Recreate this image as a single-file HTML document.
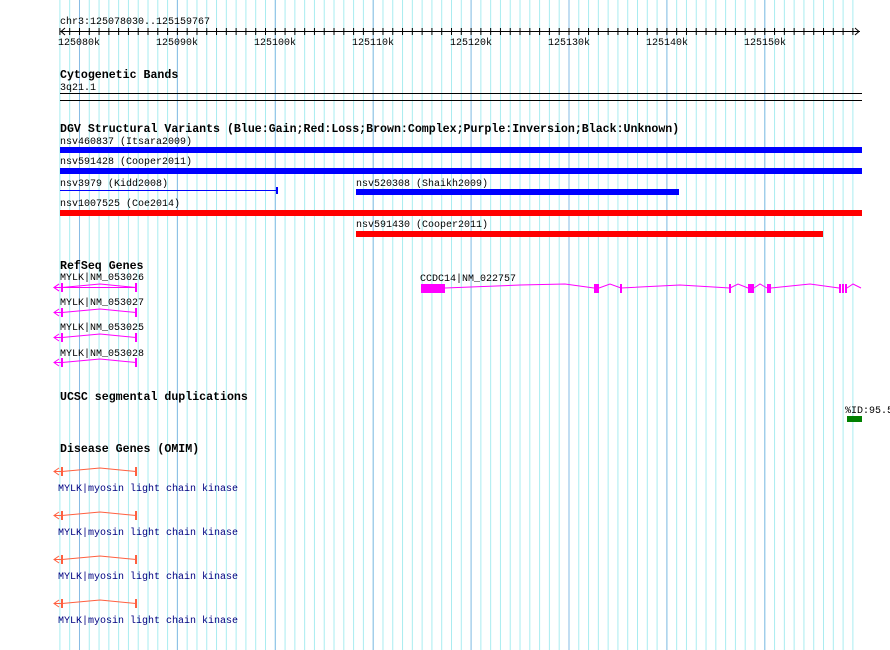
<!DOCTYPE html>
<html><head><meta charset="utf-8"><style>
html,body{margin:0;padding:0;background:#fff;}
svg{display:block;}
text{font-family:"Liberation Mono",monospace;font-size:10px;fill:#000;}
.b{font-weight:bold;font-size:11.6px;}
.n{fill:#000080;}
</style></head><body>
<svg width="890" height="650" viewBox="0 0 890 650" xmlns="http://www.w3.org/2000/svg">
<defs>
<pattern id="mn" x="59.4" y="0" width="9.79" height="650" patternUnits="userSpaceOnUse">
<rect x="0" y="0" width="1" height="650" fill="#a8ecf0"/></pattern>
<pattern id="mj" x="79" y="0" width="97.9" height="650" patternUnits="userSpaceOnUse">
<rect x="0" y="0" width="1" height="650" fill="#88bce4"/></pattern>
<pattern id="tk" x="59.4" y="0" width="9.79" height="650" patternUnits="userSpaceOnUse">
<rect x="0" y="28" width="1" height="7" fill="#000"/></pattern>
</defs>
<rect x="59" y="0" width="796" height="650" fill="url(#mn)"/>
<rect x="75" y="0" width="780" height="650" fill="url(#mj)"/>
<!-- ruler -->
<text x="60" y="24">chr3:125078030..125159767</text>
<rect x="60" y="31" width="800" height="1" fill="#000"/>
<rect x="59" y="0" width="796" height="650" fill="url(#tk)" opacity="1" style="clip-path:inset(27px 0 614px 0)"/>
<path d="M65 28 L61 31.5 L65 35 M855 28 L859 31.5 L855 35" stroke="#000" fill="none"/>
<text x="58" y="45">125080k</text><text x="156" y="45">125090k</text><text x="254" y="45">125100k</text><text x="352" y="45">125110k</text><text x="450" y="45">125120k</text><text x="548" y="45">125130k</text><text x="646" y="45">125140k</text><text x="744" y="45">125150k</text>
<!-- cyto -->
<text class="b" x="60" y="78">Cytogenetic Bands</text>
<text x="60" y="90">3q21.1</text>
<rect x="60" y="93" width="802" height="1" fill="#000"/>
<rect x="60" y="100" width="802" height="1" fill="#000"/>
<!-- DGV -->
<text class="b" x="60" y="132">DGV Structural Variants (Blue:Gain;Red:Loss;Brown:Complex;Purple:Inversion;Black:Unknown)</text>
<text x="60" y="144">nsv460837 (Itsara2009)</text>
<rect x="60" y="147" width="802" height="6" fill="#0000ff"/>
<text x="60" y="164">nsv591428 (Cooper2011)</text>
<rect x="60" y="168" width="802" height="6" fill="#0000ff"/>
<text x="60" y="186">nsv3979 (Kidd2008)</text>
<rect x="60" y="190" width="217" height="1" fill="#0000ff"/>
<rect x="276" y="187" width="2" height="7" fill="#0000ff"/>
<text x="356" y="186">nsv520308 (Shaikh2009)</text>
<rect x="356" y="189" width="323" height="6" fill="#0000ff"/>
<text x="60" y="206">nsv1007525 (Coe2014)</text>
<rect x="60" y="210" width="802" height="6" fill="#ff0000"/>
<text x="356" y="227">nsv591430 (Cooper2011)</text>
<rect x="356" y="231" width="467" height="6" fill="#ff0000"/>
<!-- RefSeq -->
<text class="b" x="60" y="269">RefSeq Genes</text>
<g fill="none" stroke="#ff00ff">
<g id="g1"><path d="M59 284 L54 287.5 L59 291 M54 287.5 L136 287.5"/></g>
</g>
<g stroke="#ff00ff" fill="none">
<path d="M59 284 L54 287.5 L59 291 M54 287.5 H62 L100 284 L136 287.5"/>
<path d="M59 309 L54 312.5 L59 316 M54 312.5 H62 L100 309 L136 312.5"/>
<path d="M59 334 L54 337.5 L59 341 M54 337.5 H62 L100 334 L136 337.5"/>
<path d="M59 359 L54 362.5 L59 366 M54 362.5 H62 L100 359 L136 362.5"/>
</g>
<g fill="#ff00ff">
<rect x="61" y="283" width="2" height="9"/><rect x="135" y="283" width="2" height="9"/>
<rect x="61" y="308" width="2" height="9"/><rect x="135" y="308" width="2" height="9"/>
<rect x="61" y="333" width="2" height="9"/><rect x="135" y="333" width="2" height="9"/>
<rect x="61" y="358" width="2" height="9"/><rect x="135" y="358" width="2" height="9"/>
</g>
<text x="60" y="280">MYLK|NM_053026</text>
<text x="60" y="305">MYLK|NM_053027</text>
<text x="60" y="330">MYLK|NM_053025</text>
<text x="60" y="356">MYLK|NM_053028</text>
<text x="420" y="281">CCDC14|NM_022757</text>
<path d="M445 288 L520 285 L565 284 L594 288 M599 288 L610 284 L621 288 L680 285 L730 288 M730 288 L738 284 L748 288 M754 288 L760 284 L767 288 M771 288 L810 284 L839 288 M847 288 L853 284 L861 288" stroke="#ff00ff" fill="none"/>
<g fill="#ff00ff">
<rect x="421" y="284" width="24" height="9"/><rect x="594" y="284" width="5" height="9"/><rect x="620" y="284" width="2" height="9"/>
<rect x="729" y="284" width="2" height="9"/><rect x="748" y="284" width="6" height="9"/><rect x="767" y="284" width="4" height="9"/>
<rect x="839" y="284" width="2" height="9"/><rect x="842" y="284" width="2" height="9"/><rect x="845" y="284" width="2" height="9"/>
</g>
<!-- UCSC -->
<text class="b" x="60" y="400">UCSC segmental duplications</text>
<text x="845" y="413">%ID:95.5</text>
<rect x="847" y="416" width="15" height="6" fill="#008000"/>
<!-- Disease -->
<text class="b" x="60" y="452">Disease Genes (OMIM)</text>
<g stroke="#ff6040" fill="none">
<path d="M59 468 L54 471.5 L59 475 M54 471.5 H62 L100 468 L136 471.5"/>
<path d="M59 512 L54 515.5 L59 519 M54 515.5 H62 L100 512 L136 515.5"/>
<path d="M59 556 L54 559.5 L59 563 M54 559.5 H62 L100 556 L136 559.5"/>
<path d="M59 600 L54 603.5 L59 607 M54 603.5 H62 L100 600 L136 603.5"/>
</g>
<g fill="#ff6040">
<rect x="61" y="467" width="2" height="9"/><rect x="135" y="467" width="2" height="9"/>
<rect x="61" y="511" width="2" height="9"/><rect x="135" y="511" width="2" height="9"/>
<rect x="61" y="555" width="2" height="9"/><rect x="135" y="555" width="2" height="9"/>
<rect x="61" y="599" width="2" height="9"/><rect x="135" y="599" width="2" height="9"/>
</g>
<text class="n" x="58" y="491">MYLK|myosin light chain kinase</text>
<text class="n" x="58" y="535">MYLK|myosin light chain kinase</text>
<text class="n" x="58" y="579">MYLK|myosin light chain kinase</text>
<text class="n" x="58" y="623">MYLK|myosin light chain kinase</text>
</svg>
</body></html>
